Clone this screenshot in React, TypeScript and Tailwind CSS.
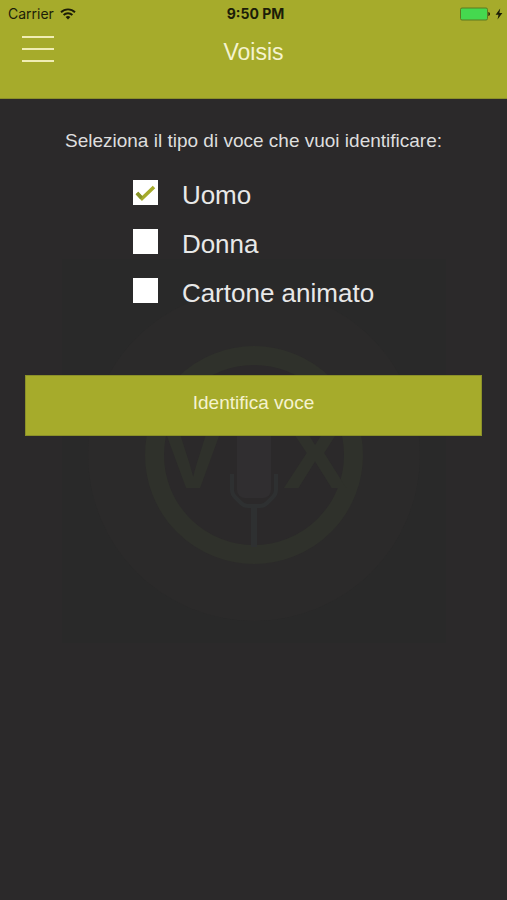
import React, { useState } from 'react';

const voiceTypes = ['Uomo', 'Donna', 'Cartone animato'];

const StatusBar: React.FC = () => (
  <div className="grid h-7 grid-cols-3 items-center pl-2 pr-1 font-['Inter',sans-serif] text-sm text-[#1c1d08]">
    <div className="flex items-center gap-1.5">
      <span>Carrier</span>
      <svg className="h-3 w-4" viewBox="0 0 16 12" fill="none" stroke="currentColor" strokeWidth="1.9" aria-hidden="true">
        <path d="M1 4.2a10 10 0 0 1 14 0" />
        <path d="M3.6 7a6.3 6.3 0 0 1 8.8 0" />
        <path d="M8 11.6 5.6 9.1a3.5 3.5 0 0 1 4.8 0z" fill="currentColor" stroke="none" />
      </svg>
    </div>
    <span className="text-center font-bold">9:50 PM</span>
    <div className="flex items-center justify-end gap-1">
      <svg className="h-3.5 w-8" viewBox="0 0 32 14" aria-hidden="true">
        <rect x="1.5" y="1" width="27" height="12" rx="1.5" fill="#45d84f" stroke="#5c7a20" />
        <path d="M29.4 5c2 .3 2 3.7 0 4z" fill="#1c1d08" />
      </svg>
      <svg className="h-3 w-2" viewBox="0 0 8 12" fill="currentColor" aria-hidden="true">
        <path d="M5.2.5.6 6.8h2.9L2.5 11.5l4.9-6.6H4.4z" />
      </svg>
    </div>
  </div>
);

const Watermark: React.FC = () => (
  <svg
    className="pointer-events-none absolute left-1/2 top-40 w-96 -translate-x-1/2"
    viewBox="0 0 384 384"
    aria-hidden="true"
  >
    <rect width="384" height="384" fill="#292929" />
    <circle cx="192" cy="196" r="166" fill="#2b2a2a" />
    <circle cx="192" cy="196" r="99.5" fill="#2b292a" stroke="#2f312b" strokeWidth="19" />
    <g fill="#2f312b" fontFamily="Liberation Sans" fontSize="96" fontWeight="700" textAnchor="middle">
      <text x="131" y="229">V</text>
      <text x="253" y="229">X</text>
    </g>
    <rect x="175" y="140" width="34" height="99" rx="8" fill="#302e30" />
    <path d="M170 215v16q0 4 3 7l6 6q3 3 7 3h12q4 0 7-3l6-6q3-3 3-7v-16" fill="none" stroke="#2e3031" strokeWidth="4" />
    <path d="M192 247v41" stroke="#2e3031" strokeWidth="6" />
  </svg>
);

const App: React.FC = () => {
  const [selected, setSelected] = useState('Uomo');

  return (
    <div className="flex min-h-screen flex-col bg-[#2b292a] font-['Liberation_Sans',sans-serif] text-[#dedede]">
      <header className="border-b border-[#8b9029] bg-[#a6ab2b] pb-7">
        <StatusBar />
        <div className="grid grid-cols-3 items-center px-5">
          <button type="button" aria-label="Menu" className="flex h-[42px] w-9 flex-col items-center justify-center gap-[10px]">
            <span className="h-0.5 w-8 bg-[#f0edb4]" />
            <span className="h-0.5 w-8 bg-[#f0edb4]" />
            <span className="h-0.5 w-8 bg-[#f0edb4]" />
          </button>
          <h1 className="pt-1.5 text-center text-[23px] text-[#f5f3cf]">Voisis</h1>
        </div>
      </header>

      <main className="relative flex-1 pt-7">
        <Watermark />
        <form className="relative" onSubmit={(e) => e.preventDefault()}>
          <fieldset>
            <legend className="w-full text-center text-[19px] leading-7">
              Seleziona il tipo di voce che vuoi identificare:
            </legend>
            <div className="mx-auto mt-[25px] flex w-fit flex-col gap-6">
              {voiceTypes.map((type) => (
                <label key={type} className="flex h-[25px] items-center gap-6 text-[26px] leading-8 text-[#e8e8e8]">
                  <span className="relative size-[25px] shrink-0">
                    <input
                      type="checkbox"
                      className="peer block size-full appearance-none bg-white"
                      checked={selected === type}
                      onChange={() => setSelected(type)}
                    />
                    <svg
                      className="pointer-events-none absolute inset-0 hidden size-full peer-checked:block"
                      viewBox="0 0 25 25"
                      fill="none"
                      strokeWidth="3.6"
                      aria-hidden="true"
                    >
                      <path d="M4 13l5 5.5L21 7" stroke="#a6ab2b" />
                      <path d="M4 13l4.5 5" stroke="#87932a" />
                    </svg>
                  </span>
                  <span className="pt-1">{type}</span>
                </label>
              ))}
            </div>
          </fieldset>
          <div className="mt-[72px] px-[25px]">
            <button
              type="submit"
              className="h-[61px] w-full border border-[#8b9029] bg-[#a6ab2b] pb-1 text-[19px] text-[#f5f3cf]"
            >
              Identifica voce
            </button>
          </div>
        </form>
      </main>
    </div>
  );
};

export default App;
